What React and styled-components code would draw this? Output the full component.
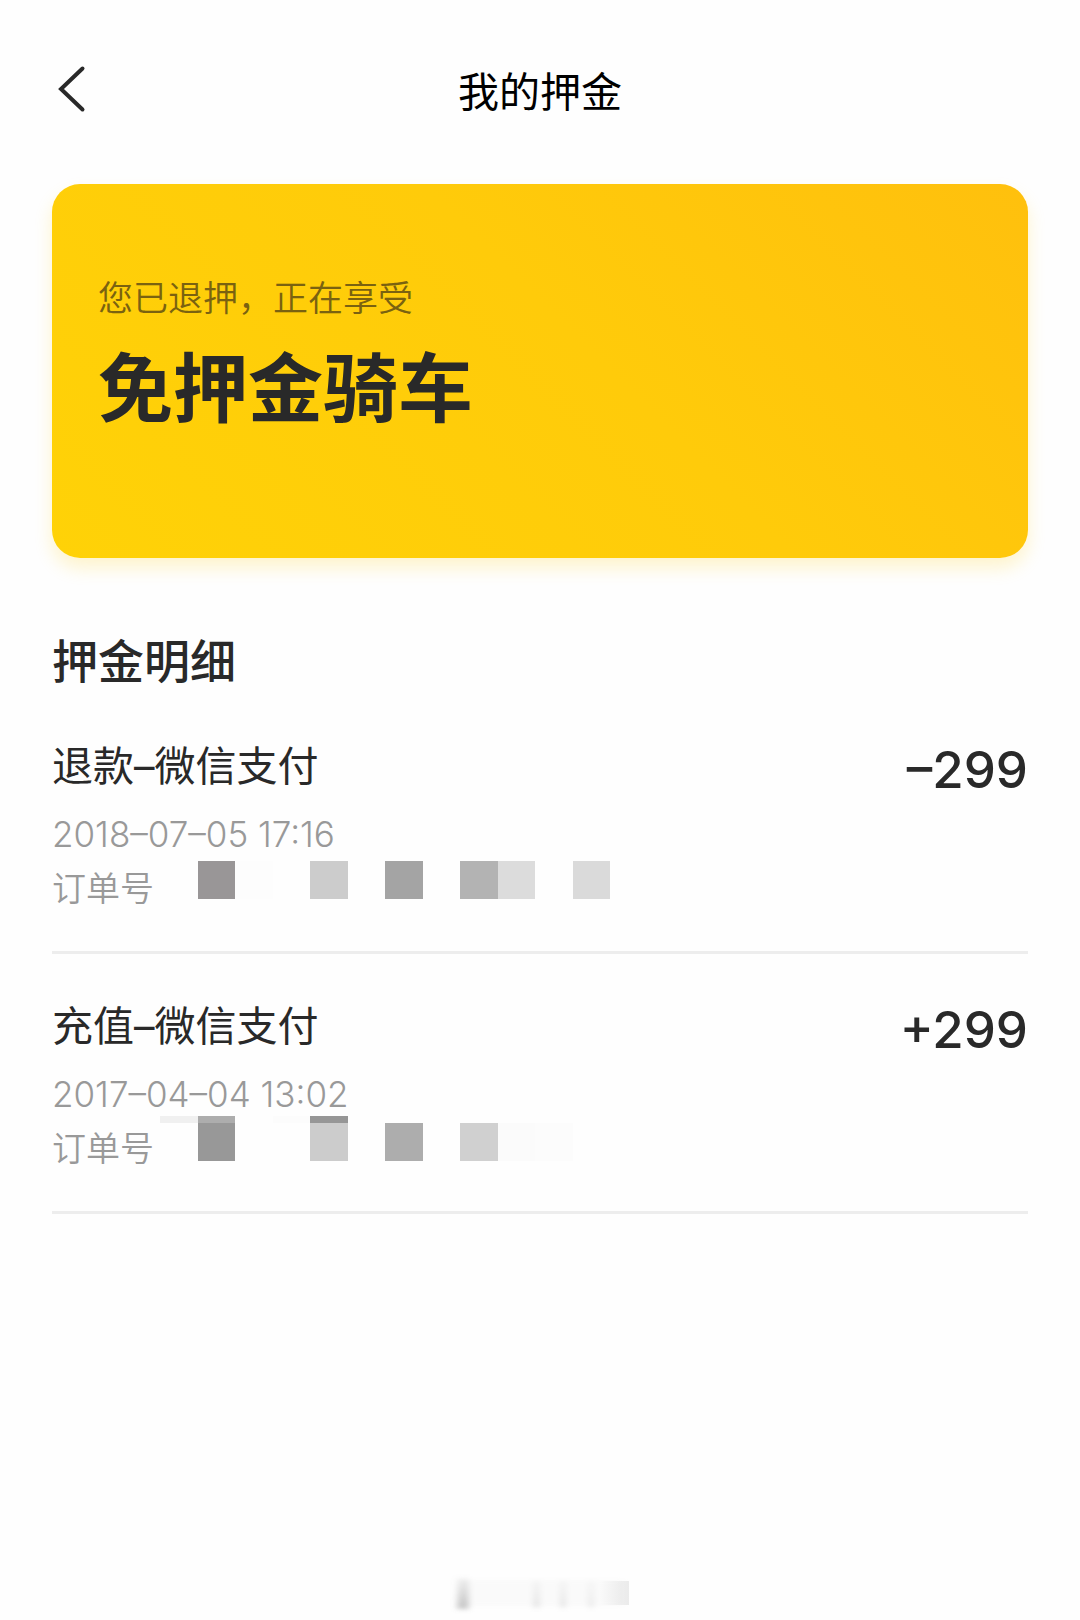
import React from 'react'
import styled, { createGlobalStyle } from 'styled-components';

const cjk = `"Noto Sans CJK SC", sans-serif`

// each block is [column, top, height, color]
const records = [
  {
    id: 1,
    title: '退款–微信支付',
    amount: '–299',
    time: '2018–07–05 17:16',
    blocks: [
      [1, 7, 38, '#999697'],
      [2, 7, 38, '#fdfdfd'],
      [4, 7, 38, '#cccccc'],
      [6, 7, 38, '#a4a4a4'],
      [8, 7, 38, '#b3b3b3'],
      [9, 7, 38, '#dcdcdc'],
      [11, 7, 38, '#dadada'],
    ],
  },
  {
    id: 2,
    title: '充值–微信支付',
    amount: '+299',
    time: '2017–04–04 13:02',
    blocks: [
      [0, 2, 7, '#f0f0f0'],
      [1, 2, 7, '#adadad'],
      [3, 2, 7, '#fcfcfc'],
      [4, 2, 7, '#969696'],
      [1, 9, 38, '#989898'],
      [4, 9, 38, '#cccccc'],
      [6, 9, 38, '#adadad'],
      [8, 9, 38, '#d0d0d0'],
      [9, 9, 38, '#fbfbfb'],
      [10, 9, 38, '#fcfcfc'],
    ],
  },
]

const Mosaic = ({ blocks }) => (
  <MosaicSvg viewBox="0 0 450 48" width="450" height="48" shapeRendering="crispEdges" aria-hidden="true">
    {blocks.map(([col, top, height, color]) => (
      <rect key={`${col}-${top}`} x={col * 37.5} y={top} width="37.5" height={height} fill={color} />
    ))}
  </MosaicSvg>
)

const Record = ({ title, amount, time, blocks }) => (
  <RecordItem>
    <RecordTop>
      <RecordInfo>
        <RecordTitle>{title}</RecordTitle>
        <RecordTime>{time}</RecordTime>
      </RecordInfo>
      <Amount>{amount}</Amount>
    </RecordTop>
    <OrderRow>
      <OrderLabel>订单号</OrderLabel>
      <Mosaic blocks={blocks} />
    </OrderRow>
  </RecordItem>
)

const Smudge = () => (
  <svg viewBox="0 0 200 44" width="200" height="44" aria-hidden="true">
    <defs>
      <filter id="soft" x="-20%" y="-20%" width="140%" height="140%">
        <feGaussianBlur stdDeviation="3 2" />
      </filter>
      <linearGradient id="fade" x1="0" y1="0" x2="0" y2="1">
        <stop offset="0" stopColor="#8a8a8a" stopOpacity="0.1" />
        <stop offset="1" stopColor="#8a8a8a" stopOpacity="0.5" />
      </linearGradient>
      <linearGradient id="edge" x1="0" y1="0" x2="1" y2="0">
        <stop offset="0" stopColor="#b0b0b0" stopOpacity="0" />
        <stop offset="1" stopColor="#b0b0b0" stopOpacity="0.4" />
      </linearGradient>
    </defs>
    <g filter="url(#soft)">
      <rect x="20" y="8" width="165" height="26" fill="#fafafa" />
      <rect x="17" y="6" width="12" height="31" fill="url(#fade)" />
      <rect x="93" y="8" width="7" height="28" fill="url(#fade)" opacity="0.4" />
      <rect x="120" y="8" width="6" height="28" fill="url(#fade)" opacity="0.4" />
      <rect x="148" y="8" width="6" height="28" fill="url(#fade)" opacity="0.3" />
    </g>
    <rect x="160" y="9" width="29" height="24" fill="url(#edge)" opacity="0.6" />
  </svg>
)

export default function App() {
  return (
    <>
    <GlobalStyle />
    <Page>
      <Header>
        <BackButton type="button" aria-label="返回">
          <svg viewBox="0 0 40 60" width="40" height="60" fill="none" stroke="#292929" strokeWidth="4" strokeLinecap="round">
            <path d="M30.5 9.5 9 30 30.5 50.5" />
          </svg>
        </BackButton>
        <PageTitle>我的押金</PageTitle>
      </Header>
      <Card>
        <CardHint>您已退押，正在享受</CardHint>
        <CardTitle>免押金骑车</CardTitle>
      </Card>
      <SectionTitle>押金明细</SectionTitle>
      <RecordList>
        {records.map((item) => (
          <Record key={item.id} {...item} />
        ))}
      </RecordList>
      <Footer>
        <Smudge />
      </Footer>
    </Page>
    </>
  )
}

const GlobalStyle = createGlobalStyle`
  * {
    box-sizing: border-box;
  }

  body {
    margin: 0;
    background: #fefefe;
    color: #292929;
    font-family: Inter, ${cjk};
  }
`

const Page = styled.main`
  display: flex;
  flex-direction: column;
  min-height: 100vh;
  padding: 0 52px;
`

const Header = styled.header`
  display: grid;
  grid-template-columns: 60px 1fr 60px;
  align-items: center;
  padding: 59px 0 65px;
`

const BackButton = styled.button`
  display: flex;
  padding: 0;
  border: none;
  background: none;
  cursor: pointer;
`

const PageTitle = styled.h1`
  margin: 0;
  color: #000;
  font: 400 41px/60px ${cjk};
  text-align: center;
`

const Card = styled.section`
  padding: 88px 46px 124px;
  border-radius: 28px;
  background: linear-gradient(45deg, #ffd207 0%, #ffcb0a 55%, #ffc00d 100%);
  box-shadow: 0 10px 18px rgba(255, 204, 10, 0.2);
`

const CardHint = styled.p`
  margin: 0 0 14px;
  color: #7a6210;
  font: 350 35px/48px ${cjk};
`

const CardTitle = styled.h2`
  margin: 0;
  font: 700 75px/100px ${cjk};
`

const SectionTitle = styled.h2`
  margin: 70px 0 6px;
  font: 500 46px/60px ${cjk};
`

const RecordList = styled.ul`
  margin: 0;
  padding: 0;
  list-style: none;
`

const RecordItem = styled.li`
  padding: 42px 0 38px;
  border-bottom: 3px solid #ededed;
`

const RecordTop = styled.div`
  display: flex;
  justify-content: space-between;
  align-items: flex-start;
`

const RecordInfo = styled.div`
  display: flex;
  flex-direction: column;
  gap: 18px;
`

const RecordTitle = styled.h3`
  margin: 0;
  font-size: 41px;
  font-weight: 400;
  line-height: 60px;
`

const RecordTime = styled.time`
  color: #999;
  font-size: 35px;
  font-weight: 300;
  line-height: 40px;
`

const Amount = styled.strong`
  font-size: 51px;
  font-weight: 500;
  line-height: 68px;
`

const OrderRow = styled.div`
  display: flex;
  align-items: flex-start;
  gap: 6px;
  height: 59px;
`

const OrderLabel = styled.span`
  align-self: flex-end;
  color: #999;
  font: 350 34px/52px ${cjk};
`

const MosaicSvg = styled.svg`
  flex: none;
`

const Footer = styled.footer`
  display: flex;
  justify-content: center;
  margin-top: auto;
  padding-bottom: 4px;
`
